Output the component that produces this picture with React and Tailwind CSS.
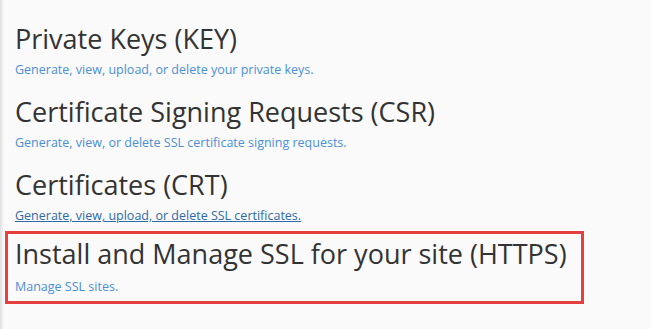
const sections = [
  { title: 'Private Keys (KEY)', desc: 'Generate, view, upload, or delete your private keys.' },
  { title: 'Certificate Signing Requests (CSR)', desc: 'Generate, view, or delete SSL certificate signing requests.' },
  { title: 'Certificates (CRT)', desc: 'Generate, view, upload, or delete SSL certificates.', active: true },
]

function Section({ title, desc, active }) {
  return (
    <div>
      <h2 className="text-[27px] leading-[34px] text-[#333333] font-normal whitespace-nowrap">{title}</h2>
      <a
        href="#"
        className={`mt-[5px] block text-[12.5px] leading-[18px] ${
          active ? 'text-[#2f6aa8] underline' : 'text-[#4a8fd8]'
        }`}
      >
        {desc}
      </a>
    </div>
  )
}

export default function App() {
  return (
    <div
      className="w-[651px] h-[329px] bg-[#fafafa] flex overflow-hidden"
      style={{ fontFamily: '"Open Sans", sans-serif' }}
    >
      <div className="w-[4px] shrink-0 bg-gradient-to-r from-[#dedede] to-[#fafafa]" />
      <div className="flex-1 pt-[22px]">
        <div className="flex flex-col gap-[16px] pl-[11px]">
          {sections.map((s) => (
            <Section key={s.title} {...s} />
          ))}
        </div>
        <div className="mt-[6px] ml-[1px] w-[579px] border-[3px] border-[#e5403f] px-[7px] pt-[3px] pb-[5px]">
          <h2 className="text-[27px] leading-[34px] text-[#333333] font-normal whitespace-nowrap">
            Install and Manage SSL for your site (HTTPS)
          </h2>
          <a href="#" className="mt-[7px] block text-[12.5px] leading-[18px] text-[#4a8fd8]">
            Manage SSL sites.
          </a>
        </div>
      </div>
    </div>
  )
}
